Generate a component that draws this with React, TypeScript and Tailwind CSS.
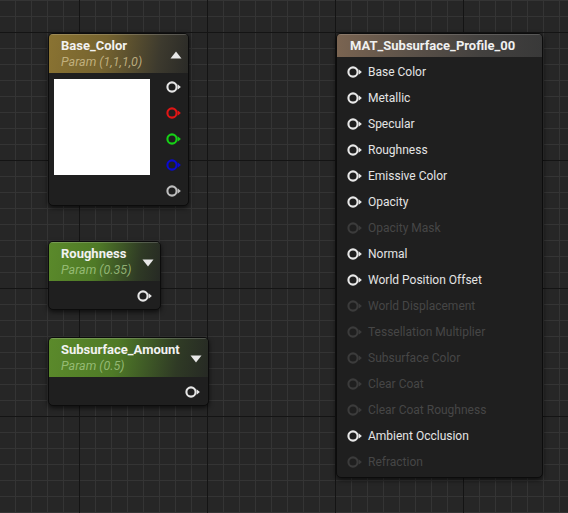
import React from "react";

type PinProps = { color?: string };

function Pin({ color = "#e6e6e6" }: PinProps) {
  return (
    <svg width="16" height="12" viewBox="0 0 16 12" className="shrink-0">
      <circle cx="6" cy="6" r="4.6" fill="none" stroke={color} strokeWidth="2.1" />
      <path d="M11.6 3.3 L14.9 6 L11.6 8.7 Z" fill={color} />
    </svg>
  );
}

function Caret({ up }: { up?: boolean }) {
  return (
    <svg width="12" height="8" viewBox="0 0 12 8" className="shrink-0">
      <path d={up ? "M6 0.5 L11.5 7.5 L0.5 7.5 Z" : "M0.5 0.5 L11.5 0.5 L6 7.5 Z"} fill="#e8e8e8" />
    </svg>
  );
}

function ParamHeader({
  title,
  sub,
  up,
  gold,
}: {
  title: string;
  sub: string;
  up?: boolean;
  gold?: boolean;
}) {
  return (
    <div
      className={
        gold
          ? "flex h-[39px] items-center pl-[12px] pr-[6px] bg-[linear-gradient(100deg,#8a7332_0%,#75632f_40%,#3d3a2e_78%,#2a2a27_100%)] shadow-[inset_0_1px_0_rgba(255,255,255,0.18)]"
          : "flex h-[39px] items-center pl-[12px] pr-[6px] bg-[linear-gradient(100deg,#5b8a2b_0%,#4f7a27_42%,#2f3a25_80%,#262924_100%)] shadow-[inset_0_1px_0_rgba(255,255,255,0.18)]"
      }
    >
      <div className="flex flex-col">
        <span className="text-[13px] leading-[16px] font-bold text-[#f2f2f2]">{title}</span>
        <span
          className={
            gold
              ? "text-[12.5px] leading-[16px] italic text-[#cdbd8c]/85"
              : "text-[12.5px] leading-[16px] italic text-[#a6c987]/80"
          }
        >
          {sub}
        </span>
      </div>
      <div className="ml-auto pt-[2px]">
        <Caret up={up} />
      </div>
    </div>
  );
}

const inputs: { label: string; on: boolean }[] = [
  { label: "Base Color", on: true },
  { label: "Metallic", on: true },
  { label: "Specular", on: true },
  { label: "Roughness", on: true },
  { label: "Emissive Color", on: true },
  { label: "Opacity", on: true },
  { label: "Opacity Mask", on: false },
  { label: "Normal", on: true },
  { label: "World Position Offset", on: true },
  { label: "World Displacement", on: false },
  { label: "Tessellation Multiplier", on: false },
  { label: "Subsurface Color", on: false },
  { label: "Clear Coat", on: false },
  { label: "Clear Coat Roughness", on: false },
  { label: "Ambient Occlusion", on: true },
  { label: "Refraction", on: false },
];

const nodeShell =
  "absolute overflow-hidden rounded-[5px] border border-[#0c0c0c] bg-[#1f1f1f] shadow-[0_2px_5px_rgba(0,0,0,0.65)]";

export default function App() {
  return (
    <div
      className="relative h-[513px] w-[568px] overflow-hidden bg-[#262626] font-['Roboto',sans-serif] bg-[linear-gradient(to_right,#141414_1px,transparent_1px),linear-gradient(to_bottom,#141414_1px,transparent_1px),linear-gradient(to_right,#343434_1px,transparent_1px),linear-gradient(to_bottom,#343434_1px,transparent_1px)] bg-[size:128px_128px,128px_128px,16px_16px,16px_16px] bg-[position:79px_32px,79px_32px,15px_0px,15px_0px]"
    >
      {/* Base_Color */}
      <div className={nodeShell + " left-[48px] top-[33px] w-[141px] h-[173px]"}>
        <ParamHeader title="Base_Color" sub="Param (1,1,1,0)" up gold />
        <div className="flex items-start">
          <div className="ml-[5px] mt-[6px] h-[96px] w-[96px] bg-white" />
          <div className="ml-auto flex flex-col pr-[6px] pt-[1px]">
            {["#e6e6e6", "#e01515", "#16d016", "#0a0ad0", "#bdbdbd"].map((c) => (
              <div key={c} className="flex h-[26px] items-center">
                <Pin color={c} />
              </div>
            ))}
          </div>
        </div>
      </div>

      {/* Roughness */}
      <div className={nodeShell + " left-[48px] top-[241px] w-[113px] h-[69px]"}>
        <ParamHeader title="Roughness" sub="Param (0.35)" />
        <div className="flex h-[29px] items-center justify-end pr-[7px]">
          <Pin />
        </div>
      </div>

      {/* Subsurface_Amount */}
      <div className={nodeShell + " left-[48px] top-[337px] w-[161px] h-[69px]"}>
        <ParamHeader title="Subsurface_Amount" sub="Param (0.5)" />
        <div className="flex h-[29px] items-center justify-end pr-[7px]">
          <Pin />
        </div>
      </div>

      {/* Material result node */}
      <div className={nodeShell + " left-[336px] top-[33px] w-[207px] h-[445px] bg-[#1d1d1d]"}>
        <div className="flex h-[23px] items-center pl-[13px] bg-[linear-gradient(90deg,#7a6451_0%,#5c5249_35%,#43413f_70%,#393939_100%)] shadow-[inset_0_1px_0_rgba(255,255,255,0.15)]">
          <span className="text-[13px] font-bold text-[#f0f0f0]">MAT_Subsurface_Profile_00</span>
        </div>
        <div className="flex flex-col pt-[2px] pl-[10px]">
          {inputs.map((p) => (
            <div key={p.label} className="flex h-[26px] items-center gap-[5px]">
              <Pin color={p.on ? "#e8e8e8" : "#3b3b3b"} />
              <span className={p.on ? "text-[12px] text-[#e4e4e4]" : "text-[12px] text-[#464646]"}>
                {p.label}
              </span>
            </div>
          ))}
        </div>
      </div>
    </div>
  );
}
